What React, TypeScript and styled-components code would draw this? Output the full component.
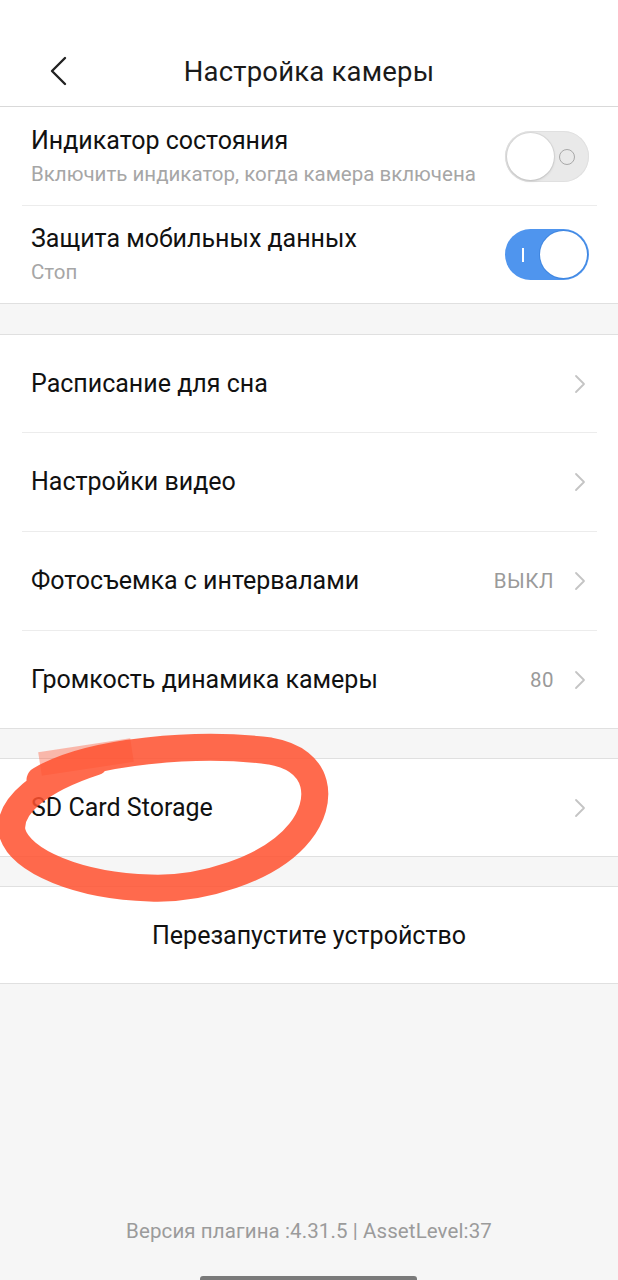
import React from "react";
import styled, { createGlobalStyle } from "styled-components";

const Global = createGlobalStyle`
  html, body { margin: 0; padding: 0; background: #f6f6f6; }
  body { font-family: Roboto, "Noto Sans", "Liberation Sans", sans-serif; -webkit-font-smoothing: antialiased; }
  * { box-sizing: border-box; }
`;

const Page = styled.div`
  position: relative;
  width: 618px;
  min-height: 1280px;
  display: flex;
  flex-direction: column;
  background: #f6f6f6;
  overflow: hidden;
`;

const Header = styled.header`
  height: 107px;
  padding-top: 36px;
  background: #fff;
  border-bottom: 1px solid #d9d9d9;
  display: grid;
  grid-template-columns: 100px 1fr 100px;
  align-items: center;
`;

const BackButton = styled.button`
  border: 0;
  background: none;
  padding: 0 0 0 48px;
  height: 70px;
  display: flex;
  align-items: center;
  cursor: pointer;
`;

const Title = styled.h1`
  margin: 0;
  text-align: center;
  font-size: 27.5px;
  font-weight: 400;
  color: #1a1a1a;
  letter-spacing: 0.2px;
`;

const Section = styled.section<{ $gap?: number }>`
  background: #fff;
  border-bottom: 1px solid #e0e0e0;
  border-top: ${(p) => (p.$gap ? "1px solid #e0e0e0" : "0")};
  margin-top: ${(p) => p.$gap || 0}px;
`;

const Row = styled.div<{ $last?: boolean; $h?: number }>`
  height: ${(p) => p.$h ?? (p.$last ? 97 : 99)}px;
  margin: 0 21px 0 22px;
  padding: 0 0 0 9px;
  display: flex;
  align-items: center;
  border-bottom: ${(p) => (p.$last ? "0" : "1px solid #ececec")};
`;

const Texts = styled.div`
  flex: 1;
  display: flex;
  flex-direction: column;
  gap: 7px;
`;

const RowTitle = styled.div`
  font-size: 25px;
  color: #111;
  line-height: 28px;
`;

const RowSub = styled.div`
  font-size: 20.5px;
  color: #a6a6a6;
  line-height: 24px;
`;

const Value = styled.span`
  font-size: 20.5px;
  color: #9a9a9a;
  margin-right: 20px;
  letter-spacing: 0.5px;
`;

const Chevron = styled.span`
  display: flex;
  align-items: center;
  margin-right: 11px;
`;

const ToggleTrack = styled.div<{ $on?: boolean }>`
  position: relative;
  width: 84px;
  height: 51px;
  border-radius: 26px;
  margin-right: 8px;
  background: ${(p) => (p.$on ? "#4f95ee" : "#e9e9e9")};
  box-shadow: ${(p) => (p.$on ? "none" : "inset 0 0 0 1px #e0e0e0")};
  display: flex;
  align-items: center;
  justify-content: ${(p) => (p.$on ? "flex-end" : "flex-start")};
  padding: 2px;
`;

const Knob = styled.div<{ $on?: boolean }>`
  width: 47px;
  height: 47px;
  border-radius: 50%;
  background: #fff;
  box-shadow: ${(p) =>
    p.$on ? "0 0 0 1px #3f86e0" : "0 1px 3px rgba(0,0,0,0.15), 0 0 0 1px #dcdcdc"};
`;

const OffMark = styled.span`
  position: absolute;
  right: 14px;
  top: 18px;
  width: 16px;
  height: 16px;
  border-radius: 50%;
  border: 1.5px solid #a8a8a8;
`;

const OnMark = styled.span`
  position: absolute;
  left: 17px;
  top: 19px;
  width: 2px;
  height: 14px;
  background: #fff;
`;

const CenterRow = styled.div`
  height: 96px;
  display: flex;
  align-items: center;
  justify-content: center;
  font-size: 25px;
  color: #111;
`;

const Footer = styled.footer`
  margin-top: auto;
  display: flex;
  flex-direction: column;
  align-items: center;
`;

const Version = styled.div`
  font-size: 20.5px;
  color: #9b9b9b;
  margin-bottom: 33px;
  letter-spacing: 0.1px;
`;

const HomeBar = styled.div`
  width: 217px;
  height: 4px;
  border-radius: 3px 3px 0 0;
  background: #7a7a7a;
  margin-left: -1px;
`;

const Annotation = styled.svg`
  position: absolute;
  left: 0;
  top: 720px;
  pointer-events: none;
`;

const ChevronRight = () => (
  <svg width="12" height="20" viewBox="0 0 12 20" fill="none">
    <path d="M2 2 L10 10 L2 18" stroke="#c4c4c4" strokeWidth="1.8" strokeLinecap="round" strokeLinejoin="round" />
  </svg>
);

const Toggle = ({ on }: { on?: boolean }) => (
  <ToggleTrack $on={on}>
    {on ? <OnMark /> : <OffMark />}
    <Knob $on={on} />
  </ToggleTrack>
);

const NavRow = ({ title, value, last, h }: { title: string; value?: string; last?: boolean; h?: number }) => (
  <Row $last={last} $h={h}>
    <Texts>
      <RowTitle>{title}</RowTitle>
    </Texts>
    {value && <Value>{value}</Value>}
    <Chevron>
      <ChevronRight />
    </Chevron>
  </Row>
);

export default function App() {
  return (
    <>
      <Global />
      <Page>
        <Header>
          <BackButton aria-label="Назад">
            <svg width="20" height="30" viewBox="0 0 20 30" fill="none">
              <path d="M17 2 L4 15 L17 28" stroke="#222" strokeWidth="2.4" strokeLinecap="round" strokeLinejoin="round" />
            </svg>
          </BackButton>
          <Title>Настройка камеры</Title>
          <div />
        </Header>

        <Section>
          <Row>
            <Texts>
              <RowTitle>Индикатор состояния</RowTitle>
              <RowSub>Включить индикатор, когда камера включена</RowSub>
            </Texts>
            <Toggle />
          </Row>
          <Row $last>
            <Texts>
              <RowTitle>Защита мобильных данных</RowTitle>
              <RowSub>Стоп</RowSub>
            </Texts>
            <Toggle on />
          </Row>
        </Section>

        <Section $gap={30}>
          <NavRow title="Расписание для сна" h={98} />
          <NavRow title="Настройки видео" />
          <NavRow title="Фотосъемка с интервалами" value="ВЫКЛ" />
          <NavRow title="Громкость динамика камеры" value="80" last />
        </Section>

        <Section $gap={29}>
          <NavRow title="SD Card Storage" last />
        </Section>

        <Section $gap={29}>
          <CenterRow>Перезапустите устройство</CenterRow>
        </Section>

        <Footer>
          <Version>Версия плагина :4.31.5 | AssetLevel:37</Version>
          <HomeBar />
        </Footer>

        <Annotation width="340" height="190" viewBox="0 0 340 190">
          <path
            d="M40 44 L 132 30"
            stroke="#ff5a3a"
            strokeOpacity="0.4"
            strokeWidth="24"
            strokeLinecap="butt"
            fill="none"
          />
          <path
            d="M40 60 C 90 30, 200 22, 270 31 C 322 40, 324 82, 300 112 C 270 150, 200 170, 150 168 C 80 166, 20 142, 12 112 C 8 86, 40 60, 95 42"
            stroke="#ff5230"
            strokeOpacity="0.86"
            strokeWidth="27"
            strokeLinecap="round"
            strokeLinejoin="round"
            fill="none"
          />
        </Annotation>
      </Page>
    </>
  );
}
